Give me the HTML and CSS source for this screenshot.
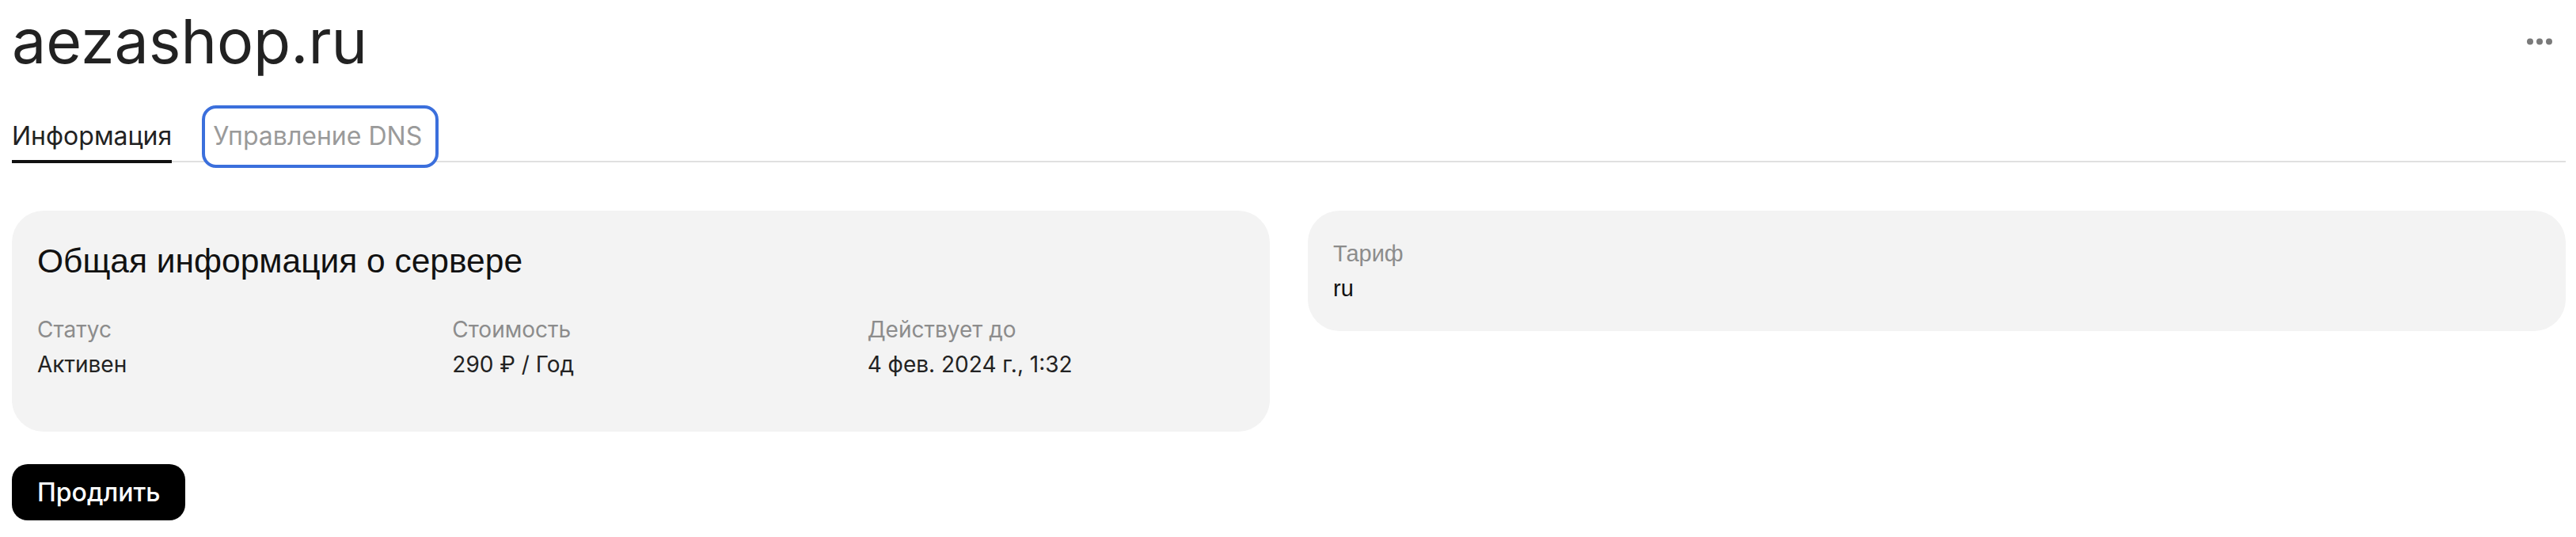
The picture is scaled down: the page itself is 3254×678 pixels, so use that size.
FILE: index.html
```html
<!DOCTYPE html>
<html lang="ru">
<head>
<meta charset="utf-8">
<title>aezashop.ru</title>
<link rel="stylesheet" href="styles.css">
</head>
<body>
<main class="page">
  <header class="page-head">
    <h1 class="page-title">aezashop.ru</h1>
    <button class="more-btn" type="button" aria-label="Ещё">
      <svg width="32" height="9" viewBox="0 0 32 9" fill="currentColor"><circle cx="4" cy="4.5" r="4"/><circle cx="16" cy="4.5" r="4"/><circle cx="28" cy="4.5" r="4"/></svg>
    </button>
  </header>
  <nav class="tabs">
    <a class="tab tab-active">Информация</a>
    <a class="tab tab-muted tab-focus">Управление DNS</a>
  </nav>
  <section class="cards">
    <div class="card card-main">
      <h2 class="card-title">Общая информация о сервере</h2>
      <div class="info-grid">
        <div class="info">
          <div class="info-label">Статус</div>
          <div class="info-value">Активен</div>
        </div>
        <div class="info">
          <div class="info-label">Стоимость</div>
          <div class="info-value">290 ₽ / Год</div>
        </div>
        <div class="info">
          <div class="info-label">Действует до</div>
          <div class="info-value">4 фев. 2024 г., 1:32</div>
        </div>
      </div>
    </div>
    <div class="card card-side">
      <div class="info info-plain">
        <div class="info-label">Тариф</div>
        <div class="info-value">ru</div>
      </div>
    </div>
  </section>
  <button class="btn-primary" type="button">Продлить</button>
</main>
</body>
</html>
```
FILE: styles.css
```css
html, body {
  margin: 0;
  background: #fff;
}
body {
  font-family: Inter, "Noto Sans", sans-serif;
  color: #222;
}
.page {
  padding: 0 13px 0 15px;
}
.page-head {
  display: flex;
  justify-content: space-between;
  align-items: center;
  padding-top: 6px;
}
.page-title {
  margin: 0;
  font-size: 77px;
  font-weight: 400;
  line-height: 92px;
  color: #222;
}
.more-btn {
  display: flex;
  background: none;
  border: 0;
  padding: 0;
  margin-right: 17px;
  color: #7a7a7a;
}
.tabs {
  display: flex;
  gap: 52px;
  margin-top: 50px;
  border-bottom: 2px solid #e0e0e0;
}
.tab {
  position: relative;
  font-size: 32px;
  line-height: 48px;
  padding-bottom: 7px;
  color: #222;
}
.tab-active::after {
  content: "";
  position: absolute;
  left: 0;
  right: 0;
  bottom: -3px;
  height: 4px;
  background: #111;
}
.tab-muted {
  color: #9a9a9a;
}
.tab-focus {
  z-index: 0;
}
.tab-focus::before {
  content: "";
  position: absolute;
  top: -15px;
  left: -14px;
  right: -21px;
  bottom: -9px;
  border: 4px solid #3b6fdc;
  border-radius: 18px;
  background: #fff;
  z-index: -1;
}
.cards {
  display: grid;
  grid-template-columns: 1fr 1fr;
  gap: 48px;
  align-items: start;
  margin-top: 61px;
}
.card {
  background: #f3f3f3;
  border-radius: 40px;
  padding: 32px;
}
.card-title {
  margin: 0;
  font-family: "Liberation Sans", Arial, sans-serif;
  font-size: 42.5px;
  font-weight: 400;
  line-height: 64px;
  color: #111;
}
.info-grid {
  display: grid;
  grid-template-columns: repeat(3, 1fr);
  gap: 48px;
  margin-top: 32px;
}
.card-main .info {
  margin-bottom: 31px;
}
.info-label {
  font-size: 28px;
  line-height: 44px;
  color: #8c8c8c;
}
.info-value {
  font-size: 28px;
  line-height: 44px;
  color: #222;
}
.info-plain .info-label,
.info-plain .info-value {
  font-family: "Liberation Sans", Arial, sans-serif;
  font-size: 29px;
}
.info-plain .info-value {
  color: #111;
}
.btn-primary {
  display: block;
  margin-top: 41px;
  height: 71px;
  padding: 0 32px;
  border: 0;
  border-radius: 20px;
  background: #000;
  color: #fff;
  font-family: inherit;
  font-size: 32px;
  font-weight: 500;
}
```
